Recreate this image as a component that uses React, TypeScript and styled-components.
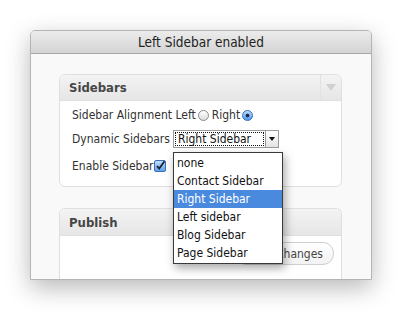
import { createGlobalStyle, styled } from 'styled-components';

const GlobalStyle = createGlobalStyle`
  html, body {
    margin: 0;
    padding: 0;
    background: #ffffff;
  }
  body {
    font-family: "DejaVu Sans Condensed", "Liberation Sans", sans-serif;
    color: #333333;
  }
`;

const Page = styled.div`
  width: 411px;
  height: 312px;
  padding: 30px 0 0 30px;
  box-sizing: border-box;
`;

const Window = styled.div`
  width: 342px;
  height: 250px;
  box-sizing: border-box;
  border: 1px solid #b4b4b4;
  border-radius: 5px 5px 0 0;
  background: #f9f9f9;
  box-shadow: 0 8px 24px rgba(0, 0, 0, 0.28);
  display: flex;
  flex-direction: column;
  overflow: hidden;
`;

const TitleBar = styled.div`
  height: 22px;
  flex: none;
  border-bottom: 1px solid #a8a8a8;
  background: linear-gradient(#ececec, #d4d4d4);
  display: flex;
  align-items: center;
  justify-content: center;
  font-size: 13.5px;
  color: #222;
`;

const WindowBody = styled.div`
  flex: 1;
  padding: 20px 29px 0 28px;
  display: flex;
  flex-direction: column;
  gap: 21px;
  overflow: hidden;
`;

const Postbox = styled.div<{ $grow?: boolean }>`
  background: #ffffff;
  border: 1px solid #dfdfdf;
  border-bottom: ${(p) => (p.$grow ? 'none' : '1px solid #dfdfdf')};
  border-radius: ${(p) => (p.$grow ? '6px 6px 0 0' : '6px')};
  flex: ${(p) => (p.$grow ? '1' : 'none')};
  display: flex;
  flex-direction: column;
`;

const BoxHeader = styled.div<{ $tall?: boolean }>`
  height: ${(p) => (p.$tall ? '26px' : '25px')};
  display: flex;
  align-items: stretch;
  justify-content: space-between;
  background: linear-gradient(#f3f3f3, #e6e6e6);
  border-bottom: 1px solid #dfdfdf;
  border-radius: 6px 6px 0 0;
`;

const BoxTitle = styled.div`
  display: flex;
  align-items: center;
  padding-left: 9px;
  font-size: 13px;
  font-weight: bold;
  color: #464646;
`;

const Toggle = styled.div`
  width: 20px;
  border-left: 1px solid #e2e2e2;
  display: flex;
  align-items: center;
  justify-content: center;
  &::after {
    content: '';
    border-left: 5px solid transparent;
    border-right: 5px solid transparent;
    border-top: 7px solid #d0d0d0;
  }
`;

const BoxContent = styled.div`
  padding: 4px 12px 6px;
  display: flex;
  flex-direction: column;
  font-size: 12px;
`;

const Row = styled.div<{ $height: number }>`
  height: ${(p) => p.$height}px;
  display: flex;
  align-items: center;
  white-space: nowrap;
`;

const Radio = styled.span<{ $checked?: boolean }>`
  width: 11px;
  height: 11px;
  margin: 0 3px 0 2px;
  border-radius: 50%;
  box-sizing: border-box;
  border: 1px solid ${(p) => (p.$checked ? '#3a6ab8' : '#8a8a8a')};
  background: ${(p) =>
    p.$checked
      ? 'radial-gradient(circle at 50% 50%, #1a2a48 0 1.6px, transparent 2.2px), linear-gradient(#b9dbff, #4d97ea)'
      : 'linear-gradient(#ffffff, #dcdcdc)'};
  display: inline-block;
`;

const Label = styled.span`
  margin-right: 3px;
`;

const SelectWrap = styled.div`
  position: relative;
  display: flex;
  height: 18px;
  width: 106px;
  box-sizing: border-box;
  border: 1px solid #9a9a9a;
  background: #fff;
`;

const SelectValue = styled.div`
  flex: 1;
  margin: 1px;
  padding-left: 3px;
  outline: 1px dotted #111;
  outline-offset: -1px;
  display: flex;
  align-items: center;
  color: #111;
`;

const SelectArrow = styled.div`
  width: 12px;
  border-left: 1px solid #9a9a9a;
  background: linear-gradient(#ffffff, #e4e4e4);
  display: flex;
  align-items: center;
  justify-content: center;
  &::after {
    content: '';
    border-left: 3px solid transparent;
    border-right: 3px solid transparent;
    border-top: 4px solid #111;
  }
`;

const Menu = styled.ul`
  position: absolute;
  top: 21px;
  left: -1px;
  width: 108px;
  margin: 0;
  padding: 1px 0;
  list-style: none;
  background: #fff;
  border: 1px solid #3a3a3a;
  box-shadow: 2px 4px 9px rgba(0, 0, 0, 0.35);
  z-index: 2;
`;

const MenuItem = styled.li<{ $active?: boolean }>`
  height: 18px;
  line-height: 18px;
  padding-left: 3px;
  color: ${(p) => (p.$active ? '#ffffff' : '#111111')};
  background: ${(p) => (p.$active ? '#4a8ade' : 'transparent')};
`;

const CheckBox = styled.svg`
  margin-left: 1px;
`;

const PublishContent = styled.div`
  padding: 6px 7px 0;
  display: flex;
  justify-content: flex-end;
`;

const Button = styled.div`
  height: 21px;
  padding: 0 10px;
  border: 1px solid #cfcfcf;
  border-radius: 11px;
  background: linear-gradient(#ffffff, #f2f2f2);
  display: flex;
  align-items: center;
  font-size: 12px;
  color: #464646;
`;

const options = [
  'none',
  'Contact Sidebar',
  'Right Sidebar',
  'Left sidebar',
  'Blog Sidebar',
  'Page Sidebar',
];

function App() {
  return (
    <Page>
      <GlobalStyle />
      <Window>
        <TitleBar>Left Sidebar enabled</TitleBar>
        <WindowBody>
          <Postbox>
            <BoxHeader>
              <BoxTitle>Sidebars</BoxTitle>
              <Toggle />
            </BoxHeader>
            <BoxContent>
              <Row $height={20}>
                Sidebar Alignment Left
                <Radio />
                Right
                <Radio $checked />
              </Row>
              <Row $height={27}>
                <Label>Dynamic Sidebars</Label>
                <SelectWrap>
                  <SelectValue>Right Sidebar</SelectValue>
                  <SelectArrow />
                  <Menu>
                    {options.map((o) => (
                      <MenuItem key={o} $active={o === 'Right Sidebar'}>
                        {o}
                      </MenuItem>
                    ))}
                  </Menu>
                </SelectWrap>
              </Row>
              <Row $height={28}>
                Enable Sidebar
                <CheckBox width="12" height="12" viewBox="0 0 12 12">
                  <defs>
                    <linearGradient id="cb" x1="0" y1="0" x2="0" y2="1">
                      <stop offset="0" stopColor="#c6e2ff" />
                      <stop offset="1" stopColor="#5a9ee8" />
                    </linearGradient>
                  </defs>
                  <rect x="0.5" y="0.5" width="11" height="11" rx="1.5" fill="url(#cb)" stroke="#3d6fb8" />
                  <path d="M3 6 L5.2 8.6 L10.5 1.2" fill="none" stroke="#1c2230" strokeWidth="1.8" />
                </CheckBox>
              </Row>
            </BoxContent>
          </Postbox>
          <Postbox $grow>
            <BoxHeader $tall>
              <BoxTitle>Publish</BoxTitle>
            </BoxHeader>
            <PublishContent>
              <Button>Save Changes</Button>
            </PublishContent>
          </Postbox>
        </WindowBody>
      </Window>
    </Page>
  );
}

export default App;
